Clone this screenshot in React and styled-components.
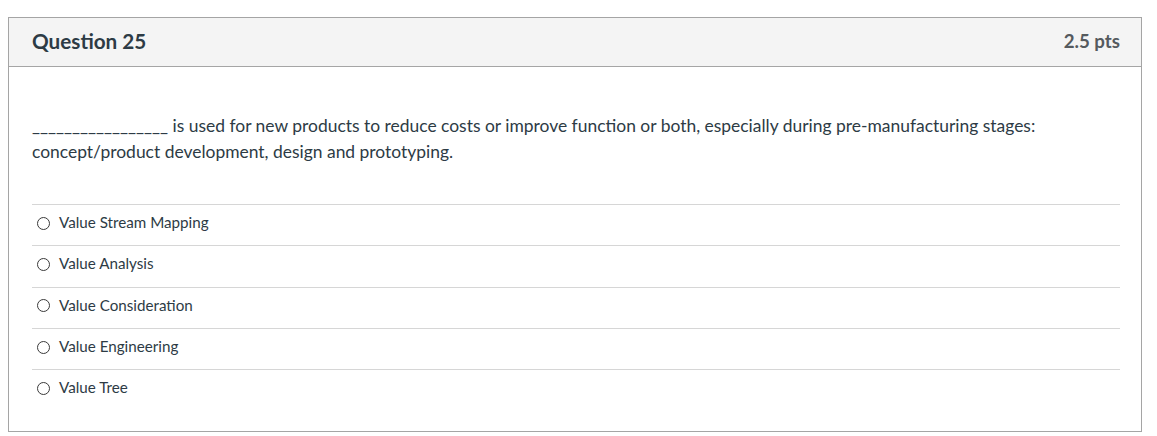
import React from 'react';
import styled, {createGlobalStyle} from 'styled-components';

const GlobalStyle = createGlobalStyle`
  body {
    margin: 0;
    padding: 17px 15px 3px 8px;
    background: #fff;
    font-family: Lato, "Noto Sans", sans-serif;
    color: #2d3b45;
  }
`;

const answers = [
    'Value Stream Mapping',
    'Value Analysis',
    'Value Consideration',
    'Value Engineering',
    'Value Tree',
];

const App = () => {
    return (<>
        <GlobalStyle/>
        <Card>
            <Header>
                <Title>Question 25</Title>
                <Points>2.5 pts</Points>
            </Header>
            <Body>
                <QuestionText>
                    _________________ is used for new products to reduce costs or improve function or both, especially during pre-manufacturing stages: concept/product development, design and prototyping.
                </QuestionText>
                <Answers>
                    {answers.map(a => (
                        <Answer key={a}>
                            <Radio/>
                            <AnswerLabel>{a}</AnswerLabel>
                        </Answer>
                    ))}
                </Answers>
            </Body>
        </Card>
    </>);
};

export default App;

const Card = styled.div`
  border: 1px solid #a5a5a5;
  background: #fff;
`;

const Header = styled.div`
  display: flex;
  justify-content: space-between;
  align-items: center;
  box-sizing: border-box;
  height: 49px;
  padding: 0 21px 3px 23px;
  background: #f4f4f4;
  border-bottom: 1px solid #a5a5a5;
`;

const Title = styled.div`
  font-size: 20.7px;
  font-weight: 700;
  color: #2d3b45;
`;

const Points = styled.div`
  font-size: 18.7px;
  font-weight: 700;
  color: #555a5e;
`;

const Body = styled.div`
  padding: 46px 21px 21px 23px;
`;

const QuestionText = styled.div`
  font-size: 17.45px;
  line-height: 26px;
  color: #2d3b45;
  margin-bottom: 39px;
`;

const Answers = styled.div`
  display: flex;
  flex-direction: column;
`;

const Answer = styled.div`
  display: flex;
  align-items: center;
  gap: 9px;
  box-sizing: border-box;
  height: 41.3px;
  padding: 0 0 6px 5px;
  border-top: 1px solid #d6d6d6;
`;

const Radio = styled.span`
  display: inline-block;
  box-sizing: border-box;
  width: 13px;
  height: 13px;
  border: 1.2px solid #3a3a3a;
  border-radius: 50%;
  margin-top: 2px;
`;

const AnswerLabel = styled.span`
  font-size: 15.2px;
  color: #2d3b45;
`;
